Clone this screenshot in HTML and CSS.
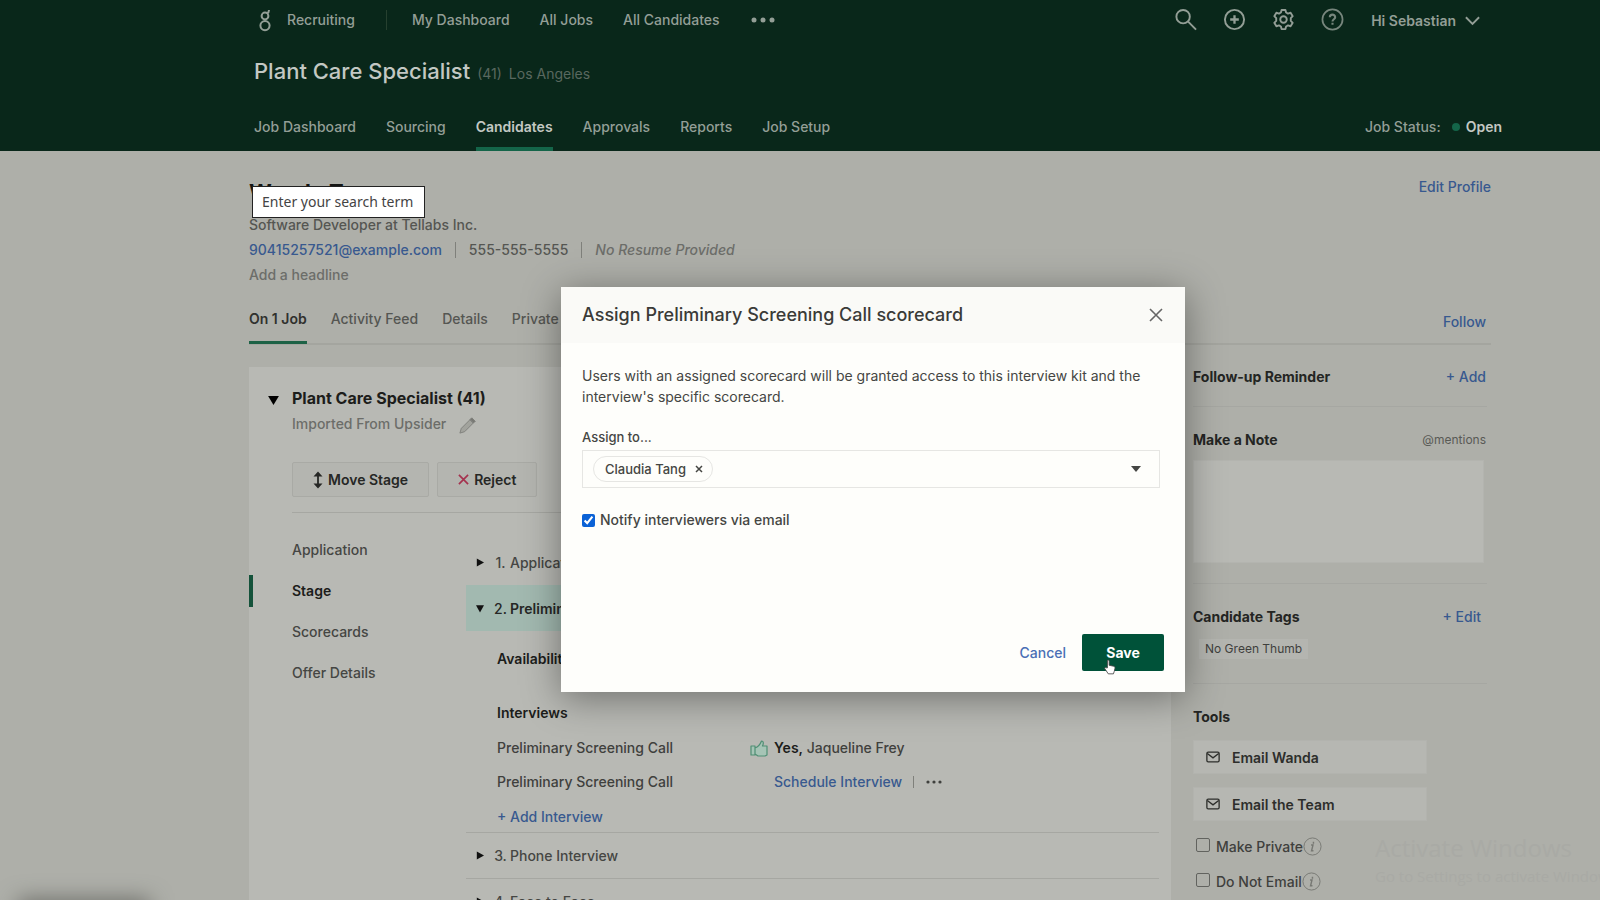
FILE: index.html
```html
<!DOCTYPE html>
<html lang="en">
<head>
<meta charset="utf-8">
<title>Plant Care Specialist - Candidates</title>
<link rel="stylesheet" href="styles.css">
</head>
<body>
<header class="topbar">
  <div class="topbar-main">
    <svg class="logo" viewBox="0 0 14 24" fill="none" stroke="currentColor" stroke-width="2"><circle cx="7" cy="8" r="3.4"/><circle cx="7" cy="17.600" r="4.600"/><path d="M9 5.500 C10.500 4.800 11 4 11 2"/></svg>
    <a class="product" href="#">Recruiting</a>
    <nav class="main-nav" aria-label="Main">
      <a href="#">My Dashboard</a>
      <a href="#">All Jobs</a>
      <a href="#">All Candidates</a>
      <button class="plain" aria-label="More"><svg class="more" viewBox="0 0 26 6" fill="currentColor"><circle cx="4" cy="3" r="2.500"/><circle cx="13" cy="3" r="2.500"/><circle cx="22" cy="3" r="2.500"/></svg></button>
    </nav>
    <div class="actions">
      <button class="plain" aria-label="Search"><svg class="icon" viewBox="0 0 24 24" fill="none" stroke="currentColor" stroke-width="2"><circle cx="9.500" cy="9" r="7"/><path d="M14.500 14 L23 22.500"/></svg></button>
      <button class="plain" aria-label="Add"><svg class="icon" viewBox="0 0 24 24" fill="none" stroke="currentColor" stroke-width="2"><circle cx="12" cy="12" r="10"/><path d="M12 7.500v9M7.500 12h9" stroke-width="2.400"/></svg></button>
      <button class="plain" aria-label="Settings"><svg class="icon" viewBox="0 0 24 24" fill="none" stroke="currentColor" stroke-width="2" stroke-linejoin="round"><path d="M10 2h4l.7 2.700 2 1.100 2.700-.8 2.200 3.500-2 2v3l2 2-2.200 3.500-2.700-.8-2 1.100L14 22h-4l-.7-2.700-2-1.100-2.700.8-2.200-3.500 2-2v-3l-2-2L4.600 5l2.700.8 2-1.100z"/><circle cx="12" cy="12" r="3.400"/></svg></button>
      <button class="plain help" aria-label="Help"><svg class="icon" viewBox="0 0 24 24" fill="none" stroke="currentColor" stroke-width="1.800"><circle cx="12" cy="12" r="10.500"/><path d="M9.200 9.700c0-3.700 5.600-3.700 5.600 0 0 2.100-2.800 2-2.800 4.300M12 15.500v2" stroke-width="2.200"/></svg></button>
      <button class="plain user">Hi Sebastian <svg class="chevron" viewBox="0 0 18 10" fill="none" stroke="currentColor" stroke-width="2"><path d="M2 1l7 7 7-7"/></svg></button>
    </div>
  </div>
  <div class="job-title"><h1>Plant Care Specialist</h1><span>(41)</span><span>Los Angeles</span></div>
  <div class="job-bar">
    <nav class="job-nav" aria-label="Job">
      <a href="#">Job Dashboard</a>
      <a href="#">Sourcing</a>
      <a href="#" class="active">Candidates</a>
      <a href="#">Approvals</a>
      <a href="#">Reports</a>
      <a href="#">Job Setup</a>
    </nav>
    <div class="job-status">Job Status: <i class="dot"></i><strong>Open</strong></div>
  </div>
</header>

<main class="page">
  <section class="profile">
    <div class="profile-top"><h2>Wanda Tang</h2><a href="#">Edit Profile</a></div>
    <p>Software Developer at Tellabs Inc.</p>
    <p class="contact"><a href="#">90415257521@example.com</a><i class="bar"></i><span>555-555-5555</span><i class="bar"></i><em>No Resume Provided</em></p>
    <p class="muted">Add a headline</p>
  </section>
  <div class="profile-tabs">
    <nav aria-label="Candidate">
      <a href="#" class="active">On 1 Job</a>
      <a href="#">Activity Feed</a>
      <a href="#">Details</a>
      <a href="#">Private</a>
    </nav>
    <a class="follow" href="#">Follow</a>
  </div>

  <div class="columns">
    <section class="card">
      <div class="card-head">
        <svg class="caret" viewBox="0 0 12 10"><path d="M0 0h12L6 10z"/></svg>
        <h3>Plant Care Specialist (41)</h3>
        <p class="source">Imported From Upsider <svg class="pencil" viewBox="0 0 20 20" fill="none" stroke="currentColor" stroke-width="1"><path d="M2 18l1.500-5L14.500 2l3.500 3.500L7 16.500z" fill="#a2a39d"/><path d="M12.500 4l3.500 3.500"/><path d="M14.500 2l3.500 3.500-1.600 1.600L12.900 3.600z" fill="#777873"/></svg></p>
        <div class="card-actions">
          <button class="btn move"><svg viewBox="0 0 10 18" fill="none" stroke="currentColor" stroke-width="1.800"><path d="M5 3v12"/><path d="M0.500 5.500L5 .5l4.500 5zM.5 12.500L5 17.500l4.500-5z" fill="currentColor" stroke="none"/></svg>Move Stage</button>
          <button class="btn reject"><svg viewBox="0 0 12 12" fill="none" stroke="#a5324e" stroke-width="1.800"><path d="M1 1l10 10M11 1L1 11"/></svg>Reject</button>
        </div>
      </div>
      <div class="card-body">
        <nav class="side-nav" aria-label="Application sections">
          <a href="#">Application</a>
          <a href="#" class="active">Stage</a>
          <a href="#">Scorecards</a>
          <a href="#">Offer Details</a>
        </nav>
        <div class="stages">
          <button class="stage"><svg class="tri" viewBox="0 0 10 10"><path d="M1 0v10l9-5z"/></svg><span>1.</span>Application Review</button>
          <button class="stage open"><svg class="tri" viewBox="0 0 10 10"><path d="M0 1h10L5 10z"/></svg><span>2.</span>Preliminary Screening Call</button>
          <div class="stage-detail">
            <h4>Availability</h4>
            <h4>Interviews</h4>
            <div class="interview"><span>Preliminary Screening Call</span>
              <svg class="thumb" viewBox="0 0 18 17" fill="#a6c4b6" stroke="#4f8f74" stroke-width="1.200" stroke-linejoin="round"><path d="M1 6h4v9H1zM5 8c3-1 5-3 6.500-7 2.500 0 2 3 1 5H17v9l-2 1H8l-3-2z"/></svg>
              <span><strong>Yes,</strong> Jaqueline Frey</span></div>
            <div class="interview"><span>Preliminary Screening Call</span><i></i>
              <span class="schedule"><a href="#">Schedule Interview</a><i class="bar"></i><button class="plain" aria-label="More options"><svg class="dots" viewBox="0 0 18 4" fill="currentColor"><circle cx="3" cy="2" r="1.600"/><circle cx="9" cy="2" r="1.600"/><circle cx="15" cy="2" r="1.600"/></svg></button></span></div>
            <a class="add" href="#">+ Add Interview</a>
          </div>
          <button class="stage lined"><svg class="tri" viewBox="0 0 10 10"><path d="M1 0v10l9-5z"/></svg><span>3.</span>Phone Interview</button>
          <button class="stage lined"><svg class="tri" viewBox="0 0 10 10"><path d="M1 0v10l9-5z"/></svg><span>4.</span>Face to Face</button>
        </div>
      </div>
    </section>

    <aside class="sidebar">
      <section class="block reminder"><h3>Follow-up Reminder</h3><a href="#">+ Add</a></section>
      <section class="block note"><h3><label for="note">Make a Note</label></h3><small>@mentions</small><textarea id="note"></textarea></section>
      <section class="block tags"><h3>Candidate Tags</h3><a href="#">+ Edit</a><span class="tag">No Green Thumb</span></section>
      <section class="tools">
        <h3>Tools</h3>
        <button class="tool"><svg viewBox="0 0 16 13" fill="none" stroke="currentColor" stroke-width="1.500"><rect x="1" y="1" width="14" height="11" rx="1.500"/><path d="M1.500 2.500L8 7.500l6.500-5"/></svg>Email Wanda</button>
        <button class="tool"><svg viewBox="0 0 16 13" fill="none" stroke="currentColor" stroke-width="1.500"><rect x="1" y="1" width="14" height="11" rx="1.500"/><path d="M1.500 2.500L8 7.500l6.500-5"/></svg>Email the Team</button>
        <div class="check"><input type="checkbox" id="private"><label for="private">Make Private</label><svg class="info" viewBox="0 0 20 20" fill="none" stroke="currentColor"><circle cx="10" cy="10" r="9"/><path d="M8.500 8.500h2L9 14.500h2M11 5v2" stroke-width="1.500"/></svg></div>
        <div class="check"><input type="checkbox" id="noemail"><label for="noemail">Do Not Email</label><svg class="info" viewBox="0 0 20 20" fill="none" stroke="currentColor"><circle cx="10" cy="10" r="9"/><path d="M8.500 8.500h2L9 14.500h2M11 5v2" stroke-width="1.500"/></svg></div>
      </section>
    </aside>
  </div>
</main>

<div class="status-shadow"></div>
<div class="watermark"><p>Activate Windows</p><p>Go to Settings to activate Windows.</p></div>
<div class="tooltip" role="tooltip">Enter your search term</div>

<div class="modal" role="dialog" aria-labelledby="modal-title">
  <div class="modal-head"><h2 id="modal-title">Assign Preliminary Screening Call scorecard</h2><button class="plain" aria-label="Close"><svg viewBox="0 0 14 14" fill="none" stroke="currentColor" stroke-width="1.600"><path d="M1 1l12 12M13 1L1 13"/></svg></button></div>
  <div class="modal-body">
    <p>Users with an assigned scorecard will be granted access to this interview kit and the interview's specific scorecard.</p>
    <label class="field-label" for="assignee">Assign to...</label>
    <div class="picker">
      <span class="chip">Claudia Tang <button class="plain" aria-label="Remove Claudia Tang"><svg viewBox="0 0 8 8" fill="none" stroke="currentColor" stroke-width="1.500"><path d="M1 1l6 6M7 1L1 7"/></svg></button></span>
      <input type="text" id="assignee">
      <button class="plain" aria-label="Show users"><svg viewBox="0 0 10 6" fill="currentColor"><path d="M0 0h10L5 6z"/></svg></button>
    </div>
    <div class="notify"><input type="checkbox" id="notify" checked><label for="notify">Notify interviewers via email</label></div>
  </div>
  <div class="modal-foot"><button class="plain cancel">Cancel</button><button class="save">Save</button></div>
  <svg class="cursor" viewBox="0 0 14 18" fill="#fff" stroke="#444" stroke-width="1"><path d="M4 10V2c0-1.500 2-1.500 2 0v5l5 1c1.500.3 2 1 1.800 2.500L12 14l-1 3H5L1 11c-.5-1.500 1-2 2-1z"/></svg>
</div>
</body>
</html>
```

FILE: styles.css
```css
* { box-sizing: border-box; }
body {
  margin: 0;
  height: 100vh;
  overflow: hidden;
  position: relative;
  background: #aeafa9;
  color: #3f403d;
  font: 14px/20px Inter, "Liberation Sans", sans-serif;
}
h1, h2, h3, h4, p { margin: 0; }
a { color: #38598f; text-decoration: none; }
svg { display: block; flex: none; }
.plain { border: 0; padding: 0; background: none; color: inherit; font: inherit; }
.bar { width: 1px; height: 16px; background: #7f807b; }

/* header */
.topbar {
  height: 151px;
  padding: 0 98px 0 254px;
  background: #09271a;
  color: #939e96;
  display: flex;
  flex-direction: column;
}
.topbar a { color: inherit; }
.topbar-main { display: flex; align-items: center; height: 39px; font-weight: 500; }
.logo { width: 14px; height: 24px; margin-left: 4px; }
.product { margin-left: 15px; padding-right: 31px; border-right: 1px solid #26402f; }
.main-nav { display: flex; align-items: center; gap: 30px; margin-left: 25px; }
.more { width: 26px; height: 6px; }
.actions { display: flex; align-items: center; gap: 26px; margin: 0 21px 0 auto; }
.icon { width: 23px; height: 23px; }
.help { opacity: .8; }
.user { display: flex; align-items: center; gap: 8px; padding: 2px 0 0 1px; font-weight: 600; }
.chevron { width: 17px; height: 10px; }
.job-title { display: flex; align-items: baseline; height: 71px; padding-top: 17px; color: #59685f; gap: 7px; }
.job-title h1 { font-size: 22px; line-height: 30px; font-weight: 500; color: #c3c8c3; }
.job-bar { display: flex; justify-content: space-between; flex: 1; font-weight: 500; }
.job-nav { display: flex; gap: 30px; }
.job-nav a { padding-top: 7px; border-bottom: 4px solid transparent; }
.job-nav .active { color: #c3c8c3; border-color: #146549; font-weight: 600; }
.job-status { display: flex; align-items: center; gap: 6px; height: 34px; }
.job-status strong { color: #c3c8c3; font-weight: 600; }
.dot { width: 8px; height: 8px; margin-left: 5px; border-radius: 50%; background: #146549; }

/* candidate */
.page { padding: 0 109px 0 249px; }
.profile { padding-top: 26px; line-height: 25px; height: 142px; font-weight: 500; color: #555652; }
.profile-top { display: flex; justify-content: space-between; height: 35px; line-height: 20px; }
.profile-top h2 { font-size: 22px; line-height: 30px; color: #151614; }
.follow { font-weight: 500; }
.contact { display: flex; align-items: center; gap: 13px; }
.contact em, .muted { color: #6c6d69; }
.profile-tabs { display: flex; justify-content: space-between; height: 52px; border-bottom: 2px solid #a4a59f; font-weight: 500; }
.profile-tabs nav { display: flex; gap: 24px; }
.profile-tabs nav a { height: 51px; padding-top: 16px; color: #555652; }
.profile-tabs nav .active { color: #30312e; border-bottom: 3px solid #1d6246; font-weight: 600; }
.follow { padding: 19px 5px 0 0; }
.columns { display: flex; gap: 22px; }

.card { flex: 1; height: 560px; margin-top: 22px; background: #b8b9b4; }
.card-head { position: relative; padding: 19px 12px 15px 0; margin-left: 43px; border-bottom: 1px solid #a6a7a2; }
.caret { position: absolute; left: -24px; top: 29px; width: 11px; height: 9px; }
.card-head h3 { font-size: 16px; line-height: 24px; font-weight: 700; color: #1c1d1b; }
.source { display: flex; gap: 12px; height: 28px; line-height: 28px; font-weight: 500; color: #6c6d69; }
.pencil { width: 19px; height: 19px; margin-top: 6px; color: #80817c; }
.card-actions { display: flex; gap: 8px; margin-top: 24px; }
.btn { display: flex; align-items: center; gap: 5px; height: 35px; padding: 0 20px; border: 1px solid #a9aaa5; border-radius: 2px; background: #b4b5b0; color: #262725; font: 600 14px Inter, sans-serif; }
.move svg { width: 10px; height: 18px; }
.reject svg { width: 11px; height: 11px; }
.card-body { display: flex; padding-right: 12px; }
.side-nav { width: 217px; padding-top: 21px; display: flex; flex-direction: column; gap: 9px; font-weight: 500; }
.side-nav a { padding: 6px 0 6px 39px; border-left: 4px solid transparent; color: #454643; line-height: 20px; }
.side-nav .active { border-color: #14523a; color: #1c1d1b; font-weight: 600; }
.stages { flex: 1; padding-top: 26px; }
.stage { display: flex; align-items: center; width: 100%; height: 46px; padding: 0 10px; border: 0; background: none; color: #454643; font: 500 14px Inter, sans-serif; white-space: nowrap; }
.stage span { width: 19px; margin-left: 7px; }
.stage.open { background: #a2b9b0; color: #262725; font-weight: 600; }
.stage.open span { font-weight: 500; }
.stage.lined { border-top: 1px solid #a6a7a2; }
.tri { width: 8px; height: 9px; fill: #111; }
.stage-detail { padding: 17px 0 5px 31px; font-weight: 500; }
.stage-detail h4 { height: 54px; font-weight: 600; line-height: 22px; color: #1c1d1b; }
.stage-detail h4 + h4 { height: 29px; }
.interview { display: grid; grid-template-columns: 253px 24px 1fr; align-items: center; height: 34px; }
.interview strong { color: #1c1d1b; font-weight: 600; }
.thumb { width: 18px; height: 17px; }
.schedule { display: flex; align-items: center; gap: 11px; }
.schedule .bar { height: 12px; }
.dots { width: 18px; height: 4px; }
.add { display: block; padding-top: 8px; }

/* sidebar */
.sidebar { width: 298px; padding-right: 4px; }
.sidebar h3 { font-size: 14px; line-height: 20px; font-weight: 700; color: #242523; }
.block { display: grid; grid-template-columns: 1fr auto; border-bottom: 1px solid #a6a7a2; }
.block a { font-weight: 500; }
.reminder { padding: 22px 0 19px; }
.reminder a { padding-right: 1px; }
.note { padding: 23px 0 20px; }
.note small { padding-right: 1px; font-size: 12px; color: #595a56; }
.note textarea { grid-column: 1 / 3; height: 103px; margin: 10px 3px 0 0; resize: none; border: 1px solid #b3b4af; background: #b8b9b4; }
.tags { padding: 23px 0 24px; }
.tags a { padding-right: 6px; }
.tag { justify-self: start; margin: 12px 0 0 6px; padding: 0 6px; background: #b4b5b0; font-size: 12px; line-height: 20px; }
.tools { padding-top: 23px; display: flex; flex-direction: column; align-items: flex-start; }
.tool { display: flex; align-items: center; gap: 12px; width: 234px; height: 34px; margin-top: 13px; padding: 0 12px; border: 1px solid #b2b3ae; background: #b6b7b2; color: #2d2e2b; font: 600 14px Inter, sans-serif; }
.tool svg { width: 14px; height: 12px; }
.check { display: flex; align-items: center; height: 35px; font-weight: 500; }
.tool + .check { margin-top: 8px; }
.check input { appearance: none; width: 14px; height: 14px; margin: 0 6px 3px 3px; border: 1px solid #62635f; border-radius: 2px; }
.info { width: 19px; height: 19px; color: #777873; }

/* overlays */
.status-shadow { position: absolute; left: 24px; bottom: -14px; width: 120px; height: 8px; box-shadow: 0 0 22px 6px #666762; }
.watermark { position: absolute; left: 1375px; top: 831px; width: 225px; overflow: hidden; white-space: nowrap; color: #a9aaa5; font: 15px/24px "Open Sans", sans-serif; }
.watermark p:first-child { font-size: 24px; line-height: 33px; }
.tooltip { position: absolute; left: 252px; top: 186px; padding: 4px 11px 4px 9px; border: 1px solid #222; background: #fff; color: #444; font: 14px/22px "Noto Sans", sans-serif; }
.modal {
  position: absolute;
  left: 561px;
  top: 287px;
  width: 624px;
  min-height: 405px;
  display: flex;
  flex-direction: column;
  background: #fefefb;
  color: #454643;
  font-weight: 500;
  box-shadow: 0 6px 36px rgba(0, 0, 0, .4);
}
.modal-head { display: flex; align-items: center; justify-content: space-between; height: 56px; padding: 0 22px 0 21px; background: #fafaf7; }
.modal-head h2 { font-size: 18px; font-weight: 500; color: #3a3b38; }
.modal-head svg { width: 14px; height: 14px; color: #666; }
.modal-body { flex: 1; padding: 22px 25px 0 21px; }
.modal-body p { line-height: 21px; margin-bottom: 20px; font-weight: 400; }
.field-label { display: block; line-height: 20px; font-size: 13px; }
.picker { display: flex; align-items: center; height: 38px; margin-top: 3px; padding: 0 18px 0 10px; border: 1px solid #e6e6e3; }
.picker input { flex: 1; border: 0; background: none; }
.picker svg { width: 10px; height: 6px; }
.chip { display: flex; align-items: center; gap: 9px; height: 26px; padding: 0 9px 0 11px; border: 1px solid #e6e6e3; border-radius: 13px; font-size: 13px; }
.chip svg { width: 8px; height: 8px; }
.notify { display: flex; align-items: center; gap: 5px; margin-top: 22px; }
.notify input { width: 13px; height: 13px; margin: 0; accent-color: #0b62d6; }
.modal-foot { display: flex; justify-content: flex-end; gap: 16px; padding: 0 21px; height: 58px; }
.modal-foot button { height: 37px; }
.cancel { color: #4a6fb5; }
.save { width: 82px; border: 0; border-radius: 2px; background: #005239; color: #fff; font: 700 14px Inter, sans-serif; }
.cursor { position: absolute; right: 69px; bottom: 17px; width: 12px; height: 16px; }
```
